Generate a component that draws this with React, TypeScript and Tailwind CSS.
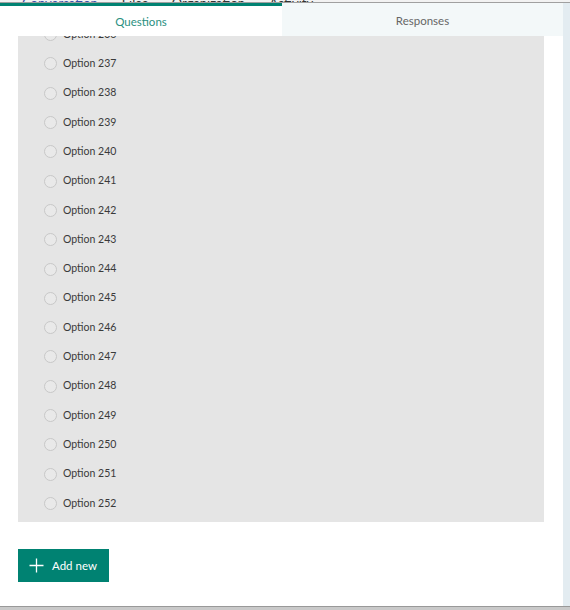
const options = Array.from({ length: 17 }, (_, i) => 236 + i);

export default function App() {
  return (
    <div
      className="w-[570px] h-[610px] flex flex-col bg-white overflow-hidden"
      style={{ fontFamily: 'Lato, "Noto Sans", sans-serif' }}
    >
      {/* cut-off nav above the frame */}
      <div className="h-[3px] shrink-0 bg-[#f2f2f2] border-b border-[#a0a0a0] overflow-hidden flex items-end">
        <div className="flex gap-[24px] pl-[22px] text-[13px] leading-[16px] text-[#333] -mb-[9px]">
          <span className="text-[#3c4ea8] underline">Conversation</span>
          <span>Files</span>
          <span>Organization</span>
          <span>Activity</span>
        </div>
      </div>

      <div className="flex flex-1 min-h-0">
        <div className="w-[563px] flex flex-col min-h-0">
          {/* tabs */}
          <div className="flex h-[33px] shrink-0">
            <div className="w-[282px] border-t-[3px] border-[#008272] bg-white flex items-center justify-center pt-[2px] text-[11.5px] text-[#2a8f7f]">
              Questions
            </div>
            <div className="flex-1 bg-[#f3f8f9] flex items-center justify-center pt-[2px] text-[11.5px] text-[#666]">
              Responses
            </div>
          </div>

          {/* scrolled content */}
          <div className="flex-1 min-h-0 overflow-hidden px-[18px] pr-[19px]">
            <div className="-mt-[16px] bg-[#e5e5e5] pb-[4px]">
              {options.map((n) => (
                <div key={n} className="h-[29.3px] flex items-center pl-[26px] gap-[6px]">
                  <span className="w-[13px] h-[13px] rounded-full border border-[#c8c8c8] bg-[#e9e9e9]" />
                  <span className="text-[10.5px] text-[#3a3a3a]">Option {n}</span>
                </div>
              ))}
            </div>

            <button className="mt-[27px] h-[33px] w-[91px] bg-[#008272] flex items-center pl-[11px] gap-[8px] text-white text-[11.5px]">
              <svg width="15" height="15" viewBox="0 0 15 15" fill="none" stroke="white" strokeWidth="1.3">
                <path d="M7.5 0.5v14M0.5 7.5h14" />
              </svg>
              Add new
            </button>
          </div>
        </div>
        <div className="w-[7px] bg-[#e3ecf1]" />
      </div>

      {/* bottom edge */}
      <div className="h-[4px] shrink-0 bg-[#c9c9c9] border-t border-[#999]" />
    </div>
  );
}
